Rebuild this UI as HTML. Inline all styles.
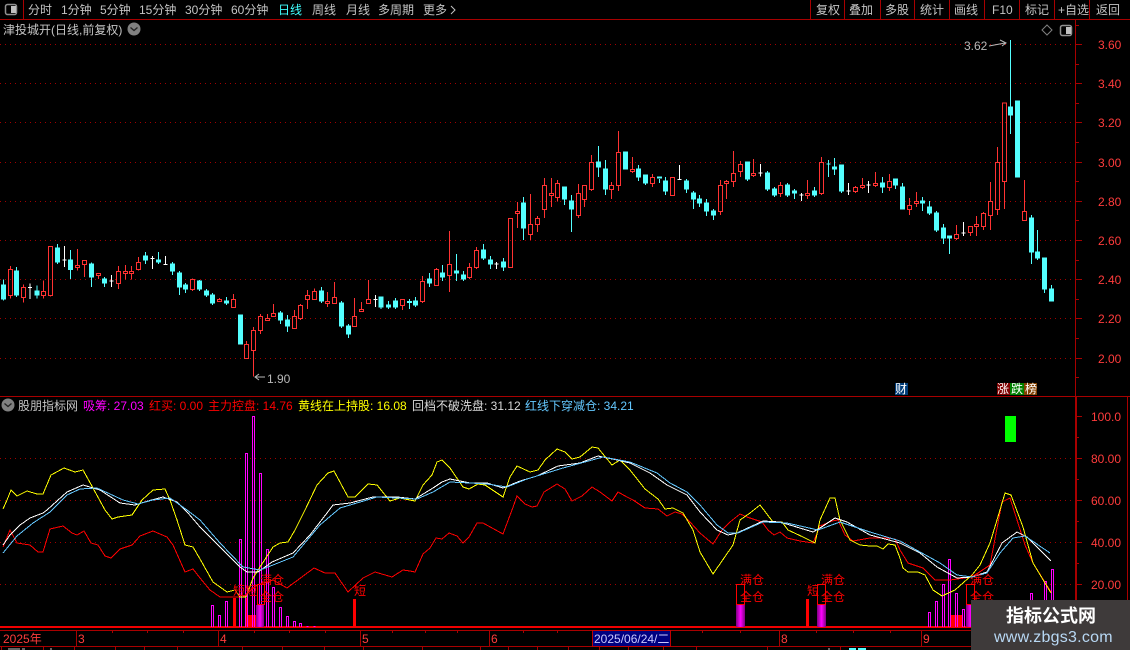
<!DOCTYPE html>
<html lang="zh"><head><meta charset="utf-8"><title>股票K线图</title>
<style>
html,body{margin:0;padding:0;background:#000;width:1130px;height:650px;overflow:hidden}
svg{display:block}
text{font-family:"Liberation Sans","Noto Sans CJK SC",sans-serif;font-size:12px}
.m text{fill:#c4c4c4}
.ax text{fill:#ff3c3c}
.s{shape-rendering:crispEdges}
</style></head><body>
<svg width="1130" height="650" viewBox="0 0 1130 650" xmlns="http://www.w3.org/2000/svg">
<defs><linearGradient id="pg" x1="0" x2="1" y1="0" y2="0"><stop offset="0" stop-color="#800080"/><stop offset=".5" stop-color="#ff00ff"/><stop offset="1" stop-color="#800080"/></linearGradient></defs>
<rect width="1130" height="650" fill="#000"/>

<!-- grid -->
<g class="s" stroke="#a00000" stroke-width="1" stroke-dasharray="1 4">
<path d="M0 44.5H1075M0 83.5H1075M0 122.5H1075M0 162.5H1075M0 201.5H1075M0 240.5H1075M0 279.5H1075M0 318.5H1075M0 358.5H1075"/>
<path d="M0 458.5H1075M0 500.5H1075M0 542.5H1075M0 584.5H1075"/>
</g>

<!-- frame lines -->
<g class="s" stroke="#a80000" stroke-width="1" fill="none">
<path d="M0 19.5H1130M0 396.5H1130M0 630.5H1130M0 646.5H1130"/>
<path d="M23.5 0V19M810.5 0V19M844.5 0V19M880.5 0V19M914.5 0V19M949.5 0V19M984.5 0V19M1019.5 0V19M1054.5 0V19M1089.5 0V19"/>
<path d="M1075.5 19V630M1076.5 397V630M1127.5 397V600"/>
<path d="M1076 44.5h6M1076 83.5h6M1076 122.5h6M1076 162.5h6M1076 201.5h6M1076 240.5h6M1076 279.5h6M1076 318.5h6M1076 358.5h6M1076 25.5h3M1076 64.5h3M1076 103.5h3M1076 142.5h3M1076 181.5h3M1076 220.5h3M1076 260.5h3M1076 299.5h3M1076 338.5h3M1076 377.5h3"/>
<path d="M1076 416.5h6M1076 458.5h6M1076 500.5h6M1076 542.5h6M1076 584.5h6M1076 437.5h3M1076 479.5h3M1076 521.5h3M1076 563.5h3M1076 605.5h3"/>
<path d="M76.5 631V646M218.5 631V646M360.5 631V646M489.5 631V646M779.5 631V646M921.5 631V646"/>
<path d="M112.5 631v2M147.5 631v2M183.5 631v2M254.5 631v2M289.5 631v2M325.5 631v2M392.5 631v2M425.5 631v2M457.5 631v2M523.5 631v2M557.5 631v2M702.5 631v2M740.5 631v2M816.5 631v2M853.5 631v2M890.5 631v2"/>
<path d="M1.5 646V650M43.5 646V650M74.5 646V650M115.5 646V650M144.5 646V650M177.5 646V650M242.5 646V650M282.5 646V650M324.5 646V650M363.5 646V650M422.5 646V650M480.5 646V650M508.5 646V650M537.5 646V650M568.5 646V650M599.5 646V650M628.5 646V650M663.5 646V650M696.5 646V650M767.5 646V650M840.5 646V650"/>
</g>
<path class="s" d="M0 626.5H1075M0 627.5H1075" stroke="#f00000" stroke-width="1"/>
<path class="s" d="M8 649h12M22 649h3M50 649h2M829 648v2" stroke="#c8c8c8"/>
<rect class="s" x="849" y="648" width="7" height="2" fill="#54ffff"/><rect class="s" x="858" y="648" width="8" height="2" fill="#54ffff"/>

<!-- top bar -->
<rect x="5.500" y="4.500" width="11" height="10" rx="2" fill="none" stroke="#909090" stroke-width="1.500"/><rect x="11" y="6" width="5" height="7" fill="#c0c0c0"/>
<g class="m">
<text x="28" y="14">分时</text><text x="61" y="14">1分钟</text><text x="100" y="14">5分钟</text><text x="139" y="14">15分钟</text><text x="185" y="14">30分钟</text><text x="231" y="14">60分钟</text>
<text x="278" y="14" style="fill:#40ffff">日线</text><text x="312" y="14">周线</text><text x="346" y="14">月线</text><text x="378" y="14">多周期</text><text x="423" y="14">更多</text>
<text x="816" y="14">复权</text><text x="849" y="14">叠加</text><text x="885" y="14">多股</text><text x="920" y="14">统计</text><text x="954" y="14">画线</text><text x="992" y="14">F10</text><text x="1025" y="14">标记</text><text x="1058" y="14">+自选</text><text x="1096" y="14">返回</text>
<text x="3" y="34">津投城开(日线,前复权)</text>
<text x="18" y="410">股朋指标网</text>
</g>
<path d="M451 6l4 4-4 4" fill="none" stroke="#c4c4c4"/>
<circle cx="134" cy="29" r="6.500" fill="#808080"/><path d="M130.500 27.500l3.500 3 3.500-3" fill="none" stroke="#222" stroke-width="1.300"/>
<circle cx="8" cy="405" r="6.500" fill="#808080"/><path d="M4.500 403.500l3.500 3 3.500-3" fill="none" stroke="#222" stroke-width="1.300"/>
<path d="M1047 25l5 5-5 5-5-5z" fill="none" stroke="#808080"/>
<rect x="1060.500" y="25.500" width="11" height="10" rx="2" fill="none" stroke="#909090" stroke-width="1.500"/><rect x="1066" y="27" width="5" height="7" fill="#c0c0c0"/>

<!-- candles: region A -->
<g class="s" stroke-width="3" transform="translate(0 230) scale(.33333)">
<path fill="none" stroke="#ff3232" d="M25 118h12V196h-12zM31 108V118M31 196V206M64 172h12V203h-12zM70 163V172M70 203V218M124 184h12V196h-12zM130 151V184M130 196V206M145 49h12V197h-12zM151 197V200M226 106h12V113h-12zM232 57V106M232 113V122M247 91h12V104h-12zM253 104V141M289 130h12V136h-12zM295 136V147M349 124h12V160h-12zM355 108V124M355 160V177M370 124h12V131h-12zM376 105V124M376 131V148M388 124h12V131h-12zM394 108V124M394 131V148M409 97h12V119h-12zM415 81V97M415 119V122M571 148h12V178h-12zM577 145V148M577 178V183M652 208h12V215h-12zM658 204V208M694 208h12V232h-12zM700 192V208M733 343h12V386h-12zM739 333V343M754 301h12V362h-12zM760 291V301M760 362V440M775 259h12V302h-12zM781 252V259M781 302V312M796 265h12V272h-12zM802 252V265M814 250h12V260h-12zM820 222V250M877 259h12V296h-12zM883 240V259M895 226h12V266h-12zM901 222V226M901 266V270M916 196h12V208h-12zM922 180V196M922 208V237M937 184h12V208h-12zM943 175V184M976 214h12V220h-12zM982 186V214M982 220V231M997 202h12V220h-12zM1003 156V202M1057 259h12V290h-12zM1063 204V259M1078 238h12V245h-12zM1084 216V238M1099 208h12V220h-12zM1105 150V208"/>
<path fill="#54ffff" stroke="#54ffff" d="M4 165h12V207h-12zM10 148V212M43 123h12V195h-12zM49 111V201M105 183h12V195h-12zM111 166V206M166 54h12V96h-12zM172 42V102M205 90h12V118h-12zM211 60V147M268 102h12V141h-12zM274 97V171M307 147h12V159h-12zM313 141V171M430 78h12V90h-12zM436 66V102M469 90h12V96h-12zM475 66V102M511 102h12V123h-12zM517 96V135M532 129h12V171h-12zM538 123V195M550 165h12V177h-12zM556 159V189M592 153h12V177h-12zM598 150V183M613 183h12V195h-12zM619 177V201M631 195h12V219h-12zM637 189V225M673 213h12V219h-12zM679 201V225M715 255h12V342h-12zM835 249h12V270h-12zM841 243V282M856 270h12V288h-12zM862 255V306M958 183h12V213h-12zM964 171V219M1018 219h12V288h-12zM1024 213V294M1039 288h12V312h-12zM1045 282V324"/>
<path fill="none" stroke="#fff" d="M84 172h12M90 160V207M187 90h12M193 48V111M328 153h12M334 135V171M451 85h12M457 78V117M490 103h12M496 78V105M1120 208h12M1126 195V231"/>
</g>
<g class="s" stroke-width="3" transform="translate(375 260) scale(.33333)">
<path fill="#54ffff" stroke="#54ffff" d="M12 111h12V141h-12zM18 141V147M34 135h12V141h-12zM40 123V147M55 123h12V141h-12zM61 114V147M97 124h12V128h-12zM103 117V147M115 123h12V135h-12zM121 111V141"/>
<path fill="none" stroke="#ff3232" d="M76 118h12V136h-12zM82 136V150M136 64h12V124h-12zM142 48V64M142 124V129"/>
</g>
<g class="s" stroke-width="3" transform="translate(380 120) scale(.33333)">
<path fill="#54ffff" stroke="#54ffff" d="M142 477h12V489h-12zM148 459V501M181 459h12V471h-12zM187 435V483M223 453h12V459h-12zM229 402V483M244 465h12V477h-12zM250 453V483M304 390h12V414h-12zM310 372V420M325 420h12V432h-12zM331 408V447M364 426h12V441h-12zM370 414V453M424 249h12V324h-12zM430 231V360M547 201h12V237h-12zM553 237V255M568 243h12V267h-12zM574 225V336M649 126h12V141h-12zM655 78V171M670 147h12V207h-12zM676 120V225M730 96h12V147h-12zM769 147h12V171h-12zM775 135V183M790 165h12V189h-12zM796 189V195M832 171h12V174h-12zM838 177V189M850 183h12V213h-12zM856 171V225M913 183h12V207h-12zM919 177V219M934 219h12V237h-12zM940 213V267M952 237h12V249h-12zM958 225V261M973 249h12V273h-12zM979 237V288M994 273h12V285h-12zM1000 267V300M1096 126h12V177h-12zM1102 177V183"/>
<path fill="none" stroke="#ff3232" d="M163 448h12V497h-12zM169 444V448M202 433h12V467h-12zM208 333V433M208 467V516M262 442h12V473h-12zM268 429V442M268 473V477M283 391h12V443h-12zM289 381V391M289 443V447M385 295h12V443h-12zM406 274h12V281h-12zM412 246V274M412 281V324M445 313h12V344h-12zM451 222V313M451 344V360M466 295h12V314h-12zM472 288V295M472 314V336M487 196h12V269h-12zM493 174V196M493 269V294M508 220h12V227h-12zM514 174V220M514 227V261M526 190h12V233h-12zM532 180V190M532 233V245M589 220h12V287h-12zM595 192V220M595 287V294M607 196h12V239h-12zM613 239V261M628 127h12V209h-12zM634 105V127M634 209V213M688 196h12V208h-12zM694 186V196M694 208V237M709 97h12V196h-12zM715 33V97M715 196V213M751 148h12V154h-12zM757 111V148M757 154V159M811 172h12V190h-12zM817 162V172M817 190V201M871 172h12V227h-12zM1015 196h12V275h-12zM1021 180V196M1021 275V285M1033 184h12V190h-12zM1039 180V184M1039 190V237M1054 160h12V185h-12zM1060 93V160M1060 185V201M1075 133h12V155h-12zM1081 123V133M1081 155V171M1114 160h12V166h-12zM1120 117V160M1120 166V171"/>
<path fill="none" stroke="#fff" d="M343 432h12M349 426V447M892 178h12M898 135V180"/>
</g>
<g class="s" stroke-width="3" transform="translate(760 130) scale(.33333)">
<path fill="#54ffff" stroke="#54ffff" d="M16 129h12V177h-12zM22 123V183M37 177h12V195h-12zM43 171V201M76 165h12V195h-12zM82 159V201M97 183h12V189h-12zM103 177V207M157 183h12V195h-12zM163 171V201M199 102h12M205 90V141M217 111h12V117h-12zM223 84V135M238 105h12V183h-12zM244 183V189M361 159h12V171h-12zM367 141V189M400 147h12V165h-12zM406 165V177M421 171h12V237h-12zM427 159V171M481 213h12V219h-12zM487 201V243M502 231h12V249h-12zM508 213V255M523 249h12V300h-12zM529 243V306M544 294h12V324h-12zM550 282V342M562 318h12V324h-12zM568 324V372M745 -69h12V-45h-12zM751 -270V12M766 -87h12V141h-12zM808 264h12V366h-12zM814 255V402M826 366h12V384h-12zM832 300V390M847 384h12V477h-12zM853 477V489M868 477h12V513h-12zM874 465V477"/>
<path fill="none" stroke="#ff3232" d="M55 166h12V190h-12zM61 156V166M61 190V201M136 190h12V196h-12zM142 150V190M142 196V207M178 97h12V190h-12zM184 81V97M184 190V195M280 172h12V185h-12zM286 168V172M286 185V189M301 166h12V172h-12zM307 144V166M307 172V177M340 160h12V166h-12zM346 126V160M346 166V171M382 154h12V172h-12zM388 132V154M388 172V183M442 226h12V238h-12zM448 204V226M448 238V255M463 214h12V220h-12zM469 186V214M469 220V231M583 314h12V326h-12zM589 285V314M589 326V330M625 289h12V307h-12zM631 307V318M643 283h12V289h-12zM649 258V283M649 289V318M664 250h12V290h-12zM670 246V250M670 290V300M685 214h12V256h-12zM691 156V214M691 256V300M706 97h12V239h-12zM712 51V97M712 239V255M727 -81h12V154h-12zM733 154V237M787 244h12V272h-12zM793 150V244"/>
<path fill="none" stroke="#fff" d="M-5 129h12M1 102V140M118 195h12M124 189V213M259 183h12M265 159V195M319 165h12M325 153V189M604 309h12M610 276V318"/>
</g>

<!-- hi/lo labels -->
<text x="964" y="50" fill="#b8b8b8">3.62</text>
<path d="M989 46l16-3M1000 40l6 3-4 3" fill="none" stroke="#b8b8b8"/>
<text x="267" y="383" fill="#b8b8b8">1.90</text>
<path d="M256 377h9M259 374l-4 3 4 3" fill="none" stroke="#b8b8b8"/>

<!-- badges -->
<rect x="895" y="383" width="13" height="12" fill="#003c78"/><text x="895" y="393" fill="#fff">财</text>
<rect x="997" y="383" width="13" height="12" fill="#800000"/><rect x="1010" y="383" width="14" height="12" fill="#008000"/><rect x="1024" y="383" width="13" height="12" fill="#804000"/>
<text x="997" y="393" fill="#fff">涨</text><text x="1011" y="393" fill="#fff">跌</text><text x="1025" y="393" fill="#fff">榜</text>

<!-- axis labels -->
<g class="ax">
<text x="1098" y="49">3.60</text><text x="1098" y="88">3.40</text><text x="1098" y="127">3.20</text><text x="1098" y="167">3.00</text><text x="1098" y="206">2.80</text><text x="1098" y="245">2.60</text><text x="1098" y="284">2.40</text><text x="1098" y="323">2.20</text><text x="1098" y="363">2.00</text>
<text x="1091" y="421">100.0</text><text x="1091" y="463">80.00</text><text x="1091" y="505">60.00</text><text x="1091" y="547">40.00</text><text x="1091" y="589">20.00</text>
<text x="3" y="643">2025年</text><text x="78" y="643">3</text><text x="220" y="643">4</text><text x="362" y="643">5</text><text x="491" y="643">6</text><text x="781" y="643">8</text><text x="923" y="643">9</text>
</g>
<rect class="s" x="592.500" y="630.500" width="78" height="16" fill="#000080" stroke="#c00000"/>
<text x="594" y="643" fill="#c8c8ff">2025/06/24/二</text>

<!-- legend -->
<text x="83" y="410" fill="#ff00ff">吸筹: 27.03</text>
<text x="149" y="410" fill="#ff0000">红买: 0.00</text>
<text x="208" y="410" fill="#ff0000">主力控盘: 14.76</text>
<text x="298" y="410" fill="#ffff00">黄线在上持股: 16.08</text>
<text x="412" y="410" fill="#d8d8d8">回档不破洗盘: 31.12</text>
<text x="525" y="410" fill="#64c8ff">红线下穿减仓: 34.21</text>

<rect class="s" x="1005" y="416" width="11" height="26" fill="#00ff00"/>

<!-- histogram -->
<g class="s" fill="#ff0000">
<rect x="245" y="598" width="3" height="29"/><rect x="247" y="615" width="9" height="12"/><rect x="233" y="598" width="3" height="29"/><rect x="353" y="599" width="3" height="28"/><rect x="806" y="599" width="3" height="28"/><rect x="951" y="615" width="12" height="12"/>
</g>
<g class="s" fill="none" stroke="#ff00ff">
<path d="M211.500 627V605.500H213.500V627M218.500 627V615.500H220.500V627M225.500 627V601.500H227.500V627M239.500 627V539.500H241.500V627M245.500 627V453.500H247.500V627M252.500 627V416.500H254.500V627M259.500 627V473.500H261.500V627M266.500 627V549.500H268.500V627M272.500 627V587.500H274.500V627M279.500 627V607.500H281.500V627M286.500 627V616.500H288.500V627M293.500 627V621.500H295.500V627M299.500 627V623.500H301.500V627M306.500 626.500H308.500M313.500 626.500H315.500"/>
<path d="M928.500 627V612.500H930.500V627M935.500 627V601.500H937.500V627M942.500 627V584.500H944.500V627M948.500 627V559.500H950.500V627M955.500 627V593.500H957.500V627M962.500 627V609.500H964.500V627M1030.500 627V593.500H1032.500V627M1044.500 627V581.500H1046.500V627M1051.500 627V569.500H1053.500V627"/>
</g>
<g class="s">
<rect x="256" y="605" width="8" height="22" fill="url(#pg)"/><rect x="736" y="605" width="9" height="22" fill="url(#pg)"/><rect x="817" y="605" width="9" height="22" fill="url(#pg)"/><rect x="966" y="605" width="9" height="22" fill="url(#pg)"/>
<rect x="257.500" y="584.500" width="7" height="20" fill="none" stroke="#ff0000"/><rect x="736.500" y="584.500" width="8" height="20" fill="none" stroke="#ff0000"/><rect x="817.500" y="584.500" width="8" height="20" fill="none" stroke="#ff0000"/><rect x="966.500" y="584.500" width="8" height="20" fill="none" stroke="#ff0000"/>
</g>

<!-- indicator lines -->
<g class="s" fill="none" stroke-width="1">
<polyline stroke="#ff0000" points="3,547 10,530 17,543 30,545 38,552 43,552 50,529 63,526 72,533 77,535 84,531 91,543 98,545 105,556 111,558 120,549 132,545 140,536 153,531 167,537 173,545 185,572 193,569 200,578 210,590 220,597 233,597 243,597 257,585 273,580 287,588 314,568 325,573 335,573 348,592 363,578 375,572 392,577 403,570 410,571 415,572 423,554 430,548 436,538 442,539 449,533 457,536 463,543 469,537 477,523 483,523 503,534 512,510 517,496 525,504 532,507 537,506 544,492 557,484 565,489 572,501 582,496 592,487 600,492 612,501 618,492 627,497 633,500 645,508 658,509 667,516 675,512 682,514 690,522 700,533 707,539 713,544 722,530 730,522 740,514 747,517 762,522 768,530 774,535 780,532 787,538 800,541 813,543 820,526 832,521 838,520 845,535 853,541 870,538 885,538 895,539 900,550 908,563 923,568 935,580 950,580 972,577 990,565 1002,502 1010,498 1025,545 1033,563 1051,592"/>
<polyline stroke="#ffff00" points="3,509 7,500 11,490 17,496 27,491 37,494 43,494 51,475 64,468 75,472 83,470 93,488 105,510 112,519 118,517 132,515 142,500 153,490 165,489 170,500 177,520 185,545 193,547 200,559 213,582 227,592 235,590 240,597 246,597 253,578 260,567 273,547 280,543 288,542 295,530 305,510 317,485 328,473 334,471 348,497 355,497 368,484 377,485 390,501 400,498 415,501 423,485 432,475 437,462 442,460 450,468 463,487 469,489 478,484 485,485 503,497 510,477 517,466 530,472 538,470 545,460 557,449 565,452 572,459 580,457 592,447 598,448 612,465 620,460 630,470 645,489 658,499 665,509 673,508 683,513 693,530 700,552 713,574 733,545 740,520 750,513 760,505 773,522 782,522 788,530 803,537 815,543 820,520 830,498 835,498 840,520 850,540 860,545 870,546 877,546 883,549 888,544 895,545 900,558 903,568 908,572 918,572 925,575 933,590 942,596 955,590 972,575 980,565 990,543 997,520 1005,493 1011,495 1023,527 1033,563 1051,593"/>
<polyline stroke="#ffffff" points="3,545 10,535 20,525 30,518 43,513 47,510 67,492 83,485 100,490 120,503 135,505 148,501 163,497 177,502 188,513 200,527 220,547 240,567 247,572 258,572 272,562 293,553 310,535 327,513 333,505 350,503 373,497 397,497 415,499 433,488 442,482 450,479 470,483 487,483 503,488 520,481 537,476 558,466 580,463 598,456 617,460 630,463 650,473 667,485 687,495 700,512 717,530 728,535 737,533 763,521 780,522 813,532 820,528 835,518 847,522 870,535 900,543 920,553 937,567 957,578 972,577 987,572 1002,543 1017,532 1027,537 1051,561"/>
<polyline stroke="#64c8ff" points="3,553 17,536 33,523 50,512 67,495 80,489 97,488 123,500 138,504 153,500 170,498 187,510 200,520 220,543 243,567 260,570 273,565 293,557 320,525 340,508 377,497 397,498 417,499 433,492 450,482 470,483 487,484 507,487 527,479 563,468 603,457 630,462 657,473 670,483 687,492 700,505 717,525 728,533 738,533 763,522 787,523 818,530 840,522 870,532 900,541 920,552 940,563 957,575 972,577 987,573 1000,553 1013,538 1025,536 1050,553"/>
</g>

<!-- markers -->
<g fill="#ff0000">
<text x="233" y="595">短</text><text x="245" y="595">短</text><text x="354" y="595">短</text><text x="807" y="595">短</text>
<text x="260" y="584">满仓</text><text x="260" y="601">全仓</text>
<text x="740" y="584">满仓</text><text x="740" y="601">全仓</text>
<text x="821" y="584">满仓</text><text x="821" y="601">全仓</text>
<text x="970" y="584">满仓</text><text x="970" y="601">全仓</text>
</g>

<!-- watermark -->
<rect x="971" y="600" width="159" height="50" fill="#3e3a3a"/>
<text x="1006" y="622" fill="#ffffff" style="font-size:18px;font-weight:bold">指标公式网</text>
<text x="994" y="642" fill="#b8d8f4" style="font-size:16px;letter-spacing:.25px">www.zbgs3.com</text>
</svg>
</body></html>
